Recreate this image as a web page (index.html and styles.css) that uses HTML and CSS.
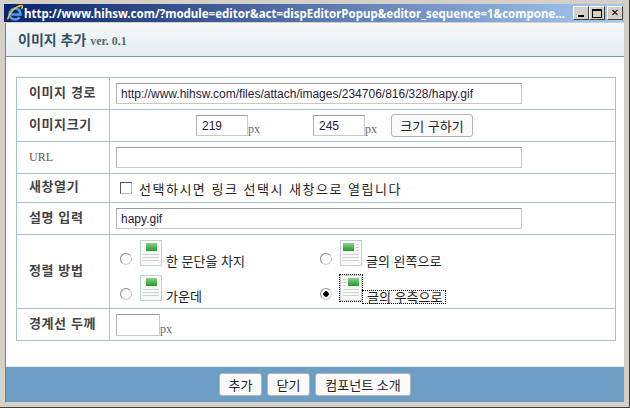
FILE: index.html
```html
<!DOCTYPE html>
<html lang="ko">
<head>
    <meta charset="UTF-8">
    <title>이미지 추가</title>
    <link rel="stylesheet" href="styles.css">
</head>
<body>
    <svg class="defs" width="0" height="0">
        <symbol id="doc" viewBox="0 0 22 26">
            <rect x="0.5" y="0.5" width="21" height="25" fill="#fbfbf6" stroke="#c3cfd6"/>
            <path d="M3 14.5h16M3 17.5h16M3 20.5h16" stroke="#c9d2d6"/>
        </symbol>
        <linearGradient id="leaf" x1="0" y1="0" x2="0" y2="1">
            <stop offset="0" stop-color="#8fd08f"/>
            <stop offset="1" stop-color="#1f9a2a"/>
        </linearGradient>
    </svg>

    <div class="window">
        <div class="titlebar">
            <svg class="ie" width="18" height="18" viewBox="0 0 18 18">
                <path d="M4 10.500h10.500C14.500 6.500 12 4.500 9.500 4.500 6 4.500 3.500 7.500 3.500 10.500c0 3 2.500 5 5.500 5 2 0 3.500-.8 4.500-2.300" fill="none" stroke="#4f9be6" stroke-width="2.600"/>
                <path d="M1.500 15.500C3 9 9 2.500 15.500 1.500 17 1.500 16.500 3.500 15.500 5" fill="none" stroke="#e8c13a" stroke-width="1.500"/>
            </svg>
            <span class="url">http://www.hihsw.com/?module=editor&amp;act=dispEditorPopup&amp;editor_sequence=1&amp;compone...</span>
            <div class="winbtns">
                <span class="winbtn"><i class="min"></i></span>
                <span class="winbtn"><i class="max"></i></span>
                <span class="winbtn close">✕</span>
            </div>
        </div>

        <div class="client">
            <div class="header">
                <h1>이미지 추가 <small>ver. 0.1</small></h1>
            </div>

            <div class="content">
                <table class="form">
                    <tr class="r32">
                        <th>이미지 경로</th>
                        <td><input class="text wide" type="text" value="http://www.hihsw.com/files/attach/images/234706/816/328/hapy.gif"></td>
                    </tr>
                    <tr class="r32">
                        <th>이미지크기</th>
                        <td>
                            <div class="sizes">
                                <span class="size"><input class="text num" type="text" value="219"><em>px</em></span>
                                <span class="size"><input class="text num" type="text" value="245"><em>px</em></span>
                                <button class="btn getsize" type="button">크기 구하기</button>
                            </div>
                        </td>
                    </tr>
                    <tr class="r32">
                        <th class="serif">URL</th>
                        <td><input class="text wide" type="text"></td>
                    </tr>
                    <tr class="r29">
                        <th>새창열기</th>
                        <td>
                            <label class="check"><input type="checkbox">선택하시면 링크 선택시 새창으로 열립니다</label>
                        </td>
                    </tr>
                    <tr class="r32">
                        <th>설명 입력</th>
                        <td><input class="text wide" type="text" value="hapy.gif"></td>
                    </tr>
                    <tr class="r74">
                        <th>정렬 방법</th>
                        <td>
                            <div class="aligns">
                                <label class="opt">
                                    <input type="radio" name="align">
                                    <svg class="doc" width="22" height="26" viewBox="0 0 22 26"><use href="#doc"/><rect x="6" y="3" width="11" height="8" fill="url(#leaf)"/></svg>
                                    <span>한 문단을 차지</span>
                                </label>
                                <label class="opt">
                                    <input type="radio" name="align">
                                    <svg class="doc" width="22" height="26" viewBox="0 0 22 26"><use href="#doc"/><rect x="3" y="3" width="11" height="8" fill="url(#leaf)"/><path d="M16 4.500h3M16 7.500h3M16 10.500h3" stroke="#c9d2d6"/></svg>
                                    <span>글의 왼쪽으로</span>
                                </label>
                                <label class="opt">
                                    <input type="radio" name="align">
                                    <svg class="doc" width="22" height="26" viewBox="0 0 22 26"><use href="#doc"/><rect x="6" y="3" width="11" height="8" fill="url(#leaf)"/></svg>
                                    <span>가운데</span>
                                </label>
                                <label class="opt focused">
                                    <input type="radio" name="align" checked>
                                    <svg class="doc" width="22" height="26" viewBox="0 0 22 26"><use href="#doc"/><rect x="8" y="3" width="11" height="8" fill="url(#leaf)"/><path d="M3 4.500h3M3 7.500h3M3 10.500h3" stroke="#c9d2d6"/></svg>
                                    <span>글의 우측으로</span>
                                </label>
                            </div>
                        </td>
                    </tr>
                    <tr class="r32">
                        <th>경계선 두께</th>
                        <td><span class="size"><input class="text border" type="text"><em>px</em></span></td>
                    </tr>
                </table>
            </div>

            <div class="footer">
                <button class="btn small" type="button">추가</button>
                <button class="btn small" type="button">닫기</button>
                <button class="btn intro" type="button">컴포넌트 소개</button>
            </div>
        </div>
    </div>
</body>
</html>
```

FILE: styles.css
```css
* {
    box-sizing: border-box;
}
html, body {
    margin: 0;
    height: 100%;
    overflow: hidden;
}
body {
    background-color: #d4d0c8;
    font-family: "Noto Sans CJK KR", "Liberation Sans", sans-serif;
    font-size: 13px;
}
.defs {
    position: absolute;
}
.window {
    display: flex;
    flex-direction: column;
    width: 630px;
    height: 408px;
    padding: 4px 5px 5px 4px;
    border-right: 1px solid #404040;
    border-bottom: 1px solid #404040;
}

/* window chrome */
.titlebar {
    display: flex;
    align-items: center;
    height: 18px;
    margin-bottom: 1px;
    padding-left: 2px;
    background: linear-gradient(to right, #0a246a, #a6caf0);
    color: #fff;
}
.ie {
    flex: none;
}
.url {
    flex: 1;
    font-family: "Noto Sans", sans-serif;
    font-size: 11.500px;
    font-weight: bold;
    white-space: nowrap;
}
.winbtns {
    display: flex;
    margin-right: 1px;
}
.winbtn {
    display: flex;
    align-items: center;
    justify-content: center;
    width: 16px;
    height: 14px;
    background-color: #d4d0c8;
    border: 1px solid;
    border-color: #fff #404040 #404040 #fff;
    color: #000;
    font-size: 10px;
    line-height: 1;
}
.close {
    margin-left: 2px;
    font-family: "DejaVu Sans", sans-serif;
    font-weight: bold;
}
.min {
    width: 6px;
    height: 2px;
    margin-top: 6px;
    background-color: #000;
}
.max {
    width: 10px;
    height: 9px;
    border: 1px solid #000;
    border-top-width: 2px;
}

.client {
    flex: 1;
    display: flex;
    flex-direction: column;
    margin-left: 1px;
    background-color: #fff;
    border-left: 1px solid #808080;
    min-height: 0;
}
.header {
    height: 34px;
    padding: 7px 0 0 12px;
    background: linear-gradient(to bottom, #f6f8f9, #e3edf3);
    border-bottom: 1px solid #7f97a3;
}
h1 {
    margin: 0;
    color: #37505f;
    font-size: 14px;
    font-weight: bold;
    line-height: 18px;
}
h1 small {
    color: #5a6a74;
    font-family: "Liberation Serif", serif;
    font-size: 12px;
}

.content {
    flex: 1;
    padding: 20px 8px 0 10px;
}
.form {
    width: 600px;
    border-collapse: collapse;
    table-layout: fixed;
}
.form th, .form td {
    border: 1px solid #a8c3d0;
    padding: 0;
}
.form th {
    width: 93px;
    padding: 0 0 5px 12px;
    color: #444;
    font-size: 13px;
    font-weight: bold;
    letter-spacing: 0.600px;
    text-align: left;
}
.form th.serif {
    padding-bottom: 0;
    color: #5b5b5b;
    font-family: "Liberation Serif", serif;
    font-size: 12px;
    font-weight: normal;
    letter-spacing: 0;
}
.form td {
    padding-left: 6px;
}
.r32 {
    height: 32px;
}
.r29 {
    height: 29px;
}
.r74 {
    height: 74px;
}

.text {
    display: block;
    height: 21px;
    padding: 0 4px;
    background-color: #fff;
    border: 1px solid #c8c8c8;
    border-top-color: #9c9c9c;
    border-left-color: #b0b0b0;
    color: #2b1a3a;
    font-family: "Liberation Sans", sans-serif;
    font-size: 12px;
}
.wide {
    width: 406px;
}
.num {
    width: 52px;
    padding-left: 5px;
}
.border {
    width: 44px;
    height: 22px;
}
.sizes {
    display: flex;
    align-items: center;
    padding-left: 80px;
}
.size {
    display: flex;
    align-items: flex-end;
}
.size em {
    color: #666;
    font-family: "Liberation Serif", serif;
    font-size: 12px;
    font-style: normal;
    line-height: 13px;
}
.size + .size {
    margin-left: 53px;
}
.getsize {
    width: 82px;
    margin-left: 14px;
}

.btn {
    height: 23px;
    padding: 0;
    background-color: #fafafa;
    border: 1px solid #b5b5b5;
    border-radius: 3px;
    color: #222;
    font-family: "Noto Sans CJK KR", sans-serif;
    font-size: 13px;
}
.small {
    width: 43px;
}
.intro {
    width: 96px;
}

.check {
    display: flex;
    align-items: center;
    padding-left: 4px;
    color: #222;
    letter-spacing: 1.500px;
}
.check input {
    appearance: none;
    width: 12px;
    height: 12px;
    margin: 0 7px 0 0;
    background-color: #fff;
    border: 1px solid #555;
    border-right-color: #bbb;
    border-bottom-color: #bbb;
}

.aligns {
    display: grid;
    grid-template-columns: 200px 200px;
    grid-auto-rows: 35px;
    padding-top: 1px;
}
.opt {
    display: flex;
    align-items: flex-end;
    color: #222;
}
.opt input {
    appearance: none;
    flex: none;
    width: 12px;
    height: 12px;
    margin: 0 8px 7px 4px;
    border: 1px solid #8a8a8a;
    border-right-color: #ccc;
    border-bottom-color: #ccc;
    border-radius: 50%;
    background-color: #fff;
}
.opt input:checked {
    background: radial-gradient(circle, #000 2.500px, #fff 3px);
}
.doc {
    flex: none;
    margin-bottom: 6px;
}
.opt span {
    margin-left: 4px;
    margin-bottom: 4px;
    line-height: 14px;
}
.focused .doc {
    outline: 1px dotted #000;
}
.focused span {
    margin-left: 0;
    margin-bottom: 3px;
    padding: 0 3px 0 4px;
    line-height: 12px;
    border: 1px dotted #000;
}

.footer {
    flex: none;
    display: flex;
    justify-content: center;
    align-items: center;
    gap: 5px;
    height: 36px;
    background-color: #6c9dc3;
    border-top: 1px solid #dfe9f0;
}
```
